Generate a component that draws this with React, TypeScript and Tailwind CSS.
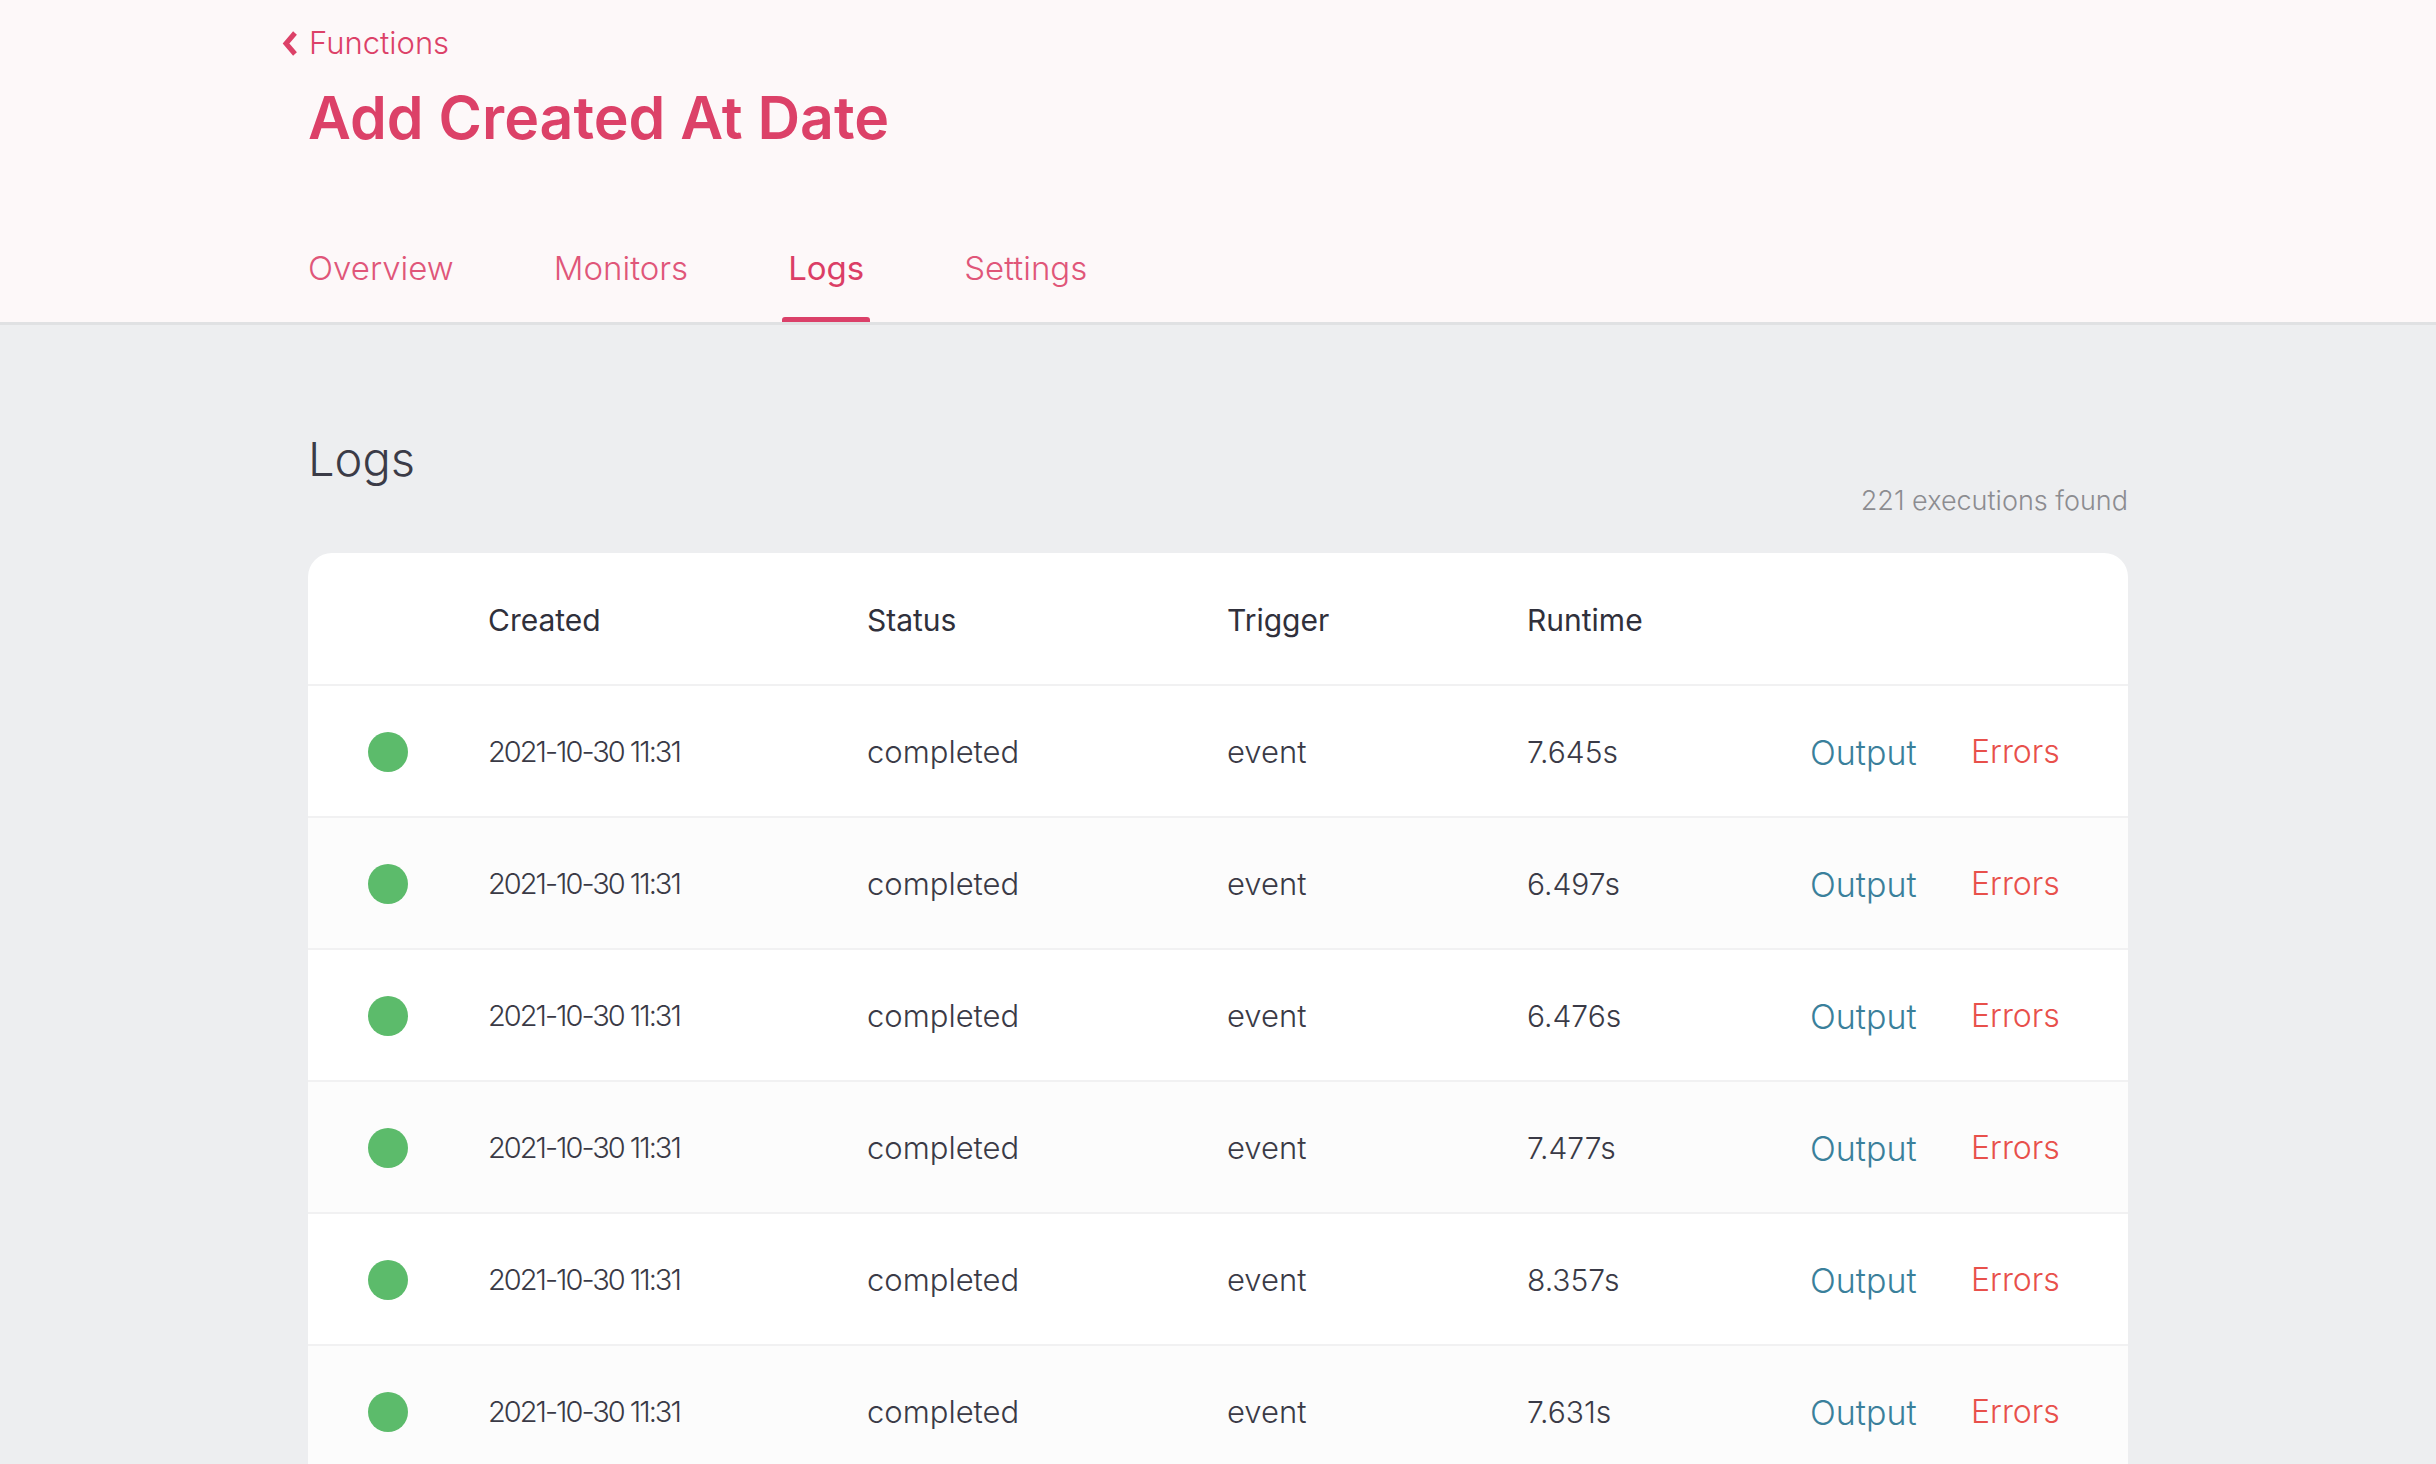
import React from 'react';

type Execution = {
  id: number;
  created: string;
  status: string;
  trigger: string;
  runtime: string;
};

const executions: Execution[] = [
  { id: 1, created: '2021-10-30 11:31', status: 'completed', trigger: 'event', runtime: '7.645s' },
  { id: 2, created: '2021-10-30 11:31', status: 'completed', trigger: 'event', runtime: '6.497s' },
  { id: 3, created: '2021-10-30 11:31', status: 'completed', trigger: 'event', runtime: '6.476s' },
  { id: 4, created: '2021-10-30 11:31', status: 'completed', trigger: 'event', runtime: '7.477s' },
  { id: 5, created: '2021-10-30 11:31', status: 'completed', trigger: 'event', runtime: '8.357s' },
  { id: 6, created: '2021-10-30 11:31', status: 'completed', trigger: 'event', runtime: '7.631s' },
];

const tabs = ['Overview', 'Monitors', 'Logs', 'Settings'];

const rowGrid = 'grid grid-cols-[120px_379px_360px_300px_283px_161px_1fr] items-center pl-[60px]';

const App: React.FC = () => {
  return (
    <div className="h-screen overflow-hidden bg-[#edeef0] font-['Inter','Open_Sans',sans-serif] text-[#3a3a46]">
      {/* header */}
      <header className="border-b-[3px] border-[#e0e1e3] bg-[#fdf8f9]">
        <div className="mx-auto w-[1820px] pt-[23px]">
          <a className="ml-[-27px] flex h-[40px] items-center gap-[10px] text-[31px] font-light text-[#dc4168]">
            <svg width="18" height="27" viewBox="0 0 18 27" fill="none">
              <path d="M14 3L5 13.5L14 24" stroke="#dc4168" strokeWidth="5" />
            </svg>
            Functions
          </a>
          <h1 className="mt-[26px] text-[59px] leading-[58px] font-semibold text-[#dc4168]">
            Add Created At Date
          </h1>
          <nav className="mt-[101px] ml-[-6px] flex gap-[88px]">
            {tabs.map((tab) => {
              const active = tab === 'Logs';
              return (
                <div key={tab} className="flex flex-col">
                  <span
                    className={
                      active
                        ? 'px-[6px] text-[33px] leading-[40px] font-normal text-[#db3e66]'
                        : 'px-[6px] text-[33px] leading-[40px] font-light text-[#e05679]'
                    }
                  >
                    {tab}
                  </span>
                  <div className={active ? 'mt-[29px] h-[5px] rounded-t-[3px] bg-[#db4069]' : 'mt-[29px] h-[5px]'} />
                </div>
              );
            })}
          </nav>
        </div>
      </header>

      <main className="mx-auto w-[1820px] pt-[106px]">
        <h2 className="text-[47px] leading-[56px] font-light text-[#3b3b47]">Logs</h2>
        <div className="mt-[-2px] text-right text-[27px] leading-[32px] font-light text-[#8c8c90]">
          221 executions found
        </div>

        <div className="mt-[36px] overflow-hidden rounded-t-[24px] bg-white">
          <div className={`${rowGrid} h-[133px] border-b-2 border-[#f1f1f2] pt-[3px] text-[30px] font-normal text-[#30303b]`}>
            <div />
            <div>Created</div>
            <div>Status</div>
            <div>Trigger</div>
            <div>Runtime</div>
            <div />
            <div />
          </div>
          {executions.map((ex, i) => (
            <div
              key={ex.id}
              className={`${rowGrid} h-[132px] border-b-2 border-[#f1f1f2] pt-[2px] text-[31px] font-light ${
                i % 2 === 1 ? 'bg-[#fcfcfc]' : 'bg-white'
              }`}
            >
              <div>
                <span className="block h-[40px] w-[40px] rounded-full bg-[#5cbb6b]" />
              </div>
              <div className="text-[29px] tracking-[-2px]">{ex.created}</div>
              <div>{ex.status}</div>
              <div>{ex.trigger}</div>
              <div className="text-[30px]">{ex.runtime}</div>
              <a className="text-[34px] text-[#3a809b]">Output</a>
              <a className="text-[32px] text-[#e8504b]">Errors</a>
            </div>
          ))}
        </div>
      </main>
    </div>
  );
};

export default App;
